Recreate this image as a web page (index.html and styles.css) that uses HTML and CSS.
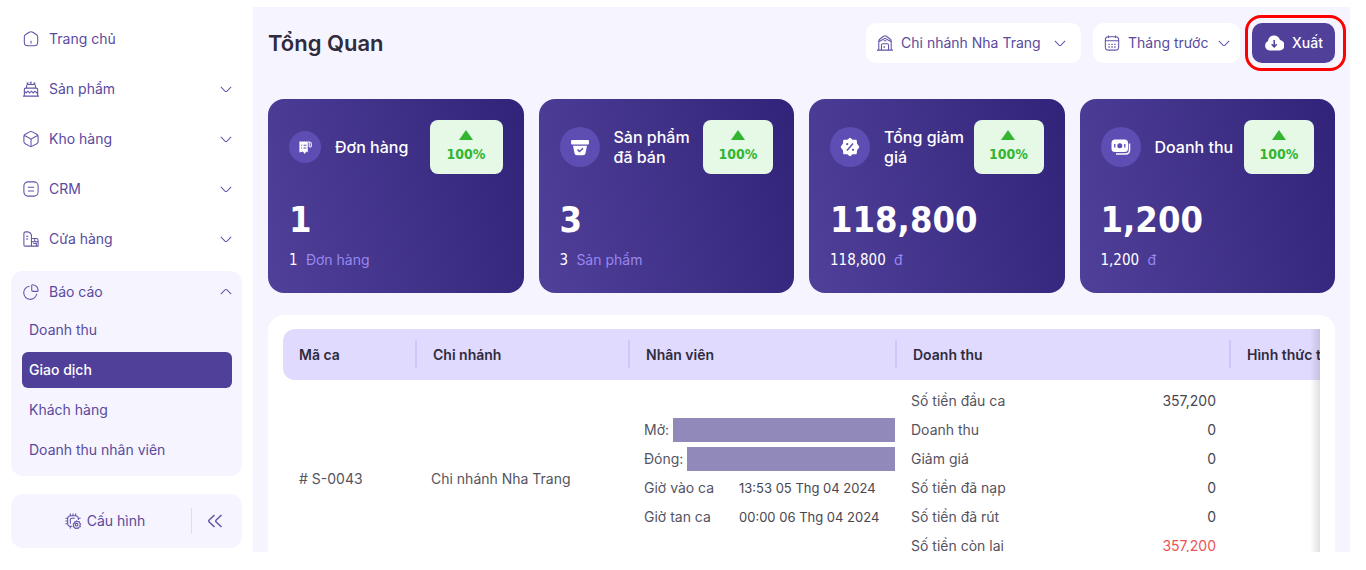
FILE: index.html
```html
<!DOCTYPE html>
<html lang="vi">
<head>
<meta charset="utf-8">
<meta name="viewport" content="width=device-width, initial-scale=1">
<title>Tổng Quan</title>
<link rel="stylesheet" href="styles.css">
</head>
<body>
<svg class="sprite" aria-hidden="true">
  <symbol id="down" viewBox="0 0 14 8"><path d="M1 1l4.800 4.800q1.200 1 2.400 0L13 1"/></symbol>
  <symbol id="up" viewBox="0 0 14 8"><path d="M1 7l4.800-4.800q1.200-1 2.400 0L13 7"/></symbol>
  <symbol id="tri" viewBox="0 0 14 10"><path d="M7 0l7 10H0z"/></symbol>
</svg>
<div class="app">
  <nav class="sidebar" aria-label="Menu chính">
    <a class="item" href="#"><svg class="icon" viewBox="0 0 18 18"><path d="M1.500 6.500Q1.500 5 3 4l4-2.600q2-1.200 4 0L15 4q1.500 1 1.500 2.500V13q0 3.500-3.500 3.500H5Q1.500 16.500 1.500 13zM9 11v3"/></svg><span>Trang chủ</span></a>
    <button class="item"><svg class="icon" viewBox="0 0 18 18"><path d="M0 17h18M1.500 17V9.500Q1.500 8 3 8h12q1.500 0 1.500 1.500V17M4 8V5.500Q4 4 5.500 4h7Q14 4 14 5.500V8M5.500 4V1.500M9 4V.5M12.500 4V1.500M4 2.500h1.500M7.500 2H9M12.500 2.500H14M1.500 11.500l2 2 2-2 2 2 2-2 2 2 2-2 2 2 1-1"/></svg><span>Sản phẩm</span><svg class="chev"><use href="#down"/></svg></button>
    <button class="item"><svg class="icon" viewBox="0 0 18 18"><path d="M7.500 1q1.500-.8 3 0l5 2.700q1.500.8 1.500 2.500v5.600q0 1.700-1.500 2.500l-5 2.700q-1.500.8-3 0l-5-2.700Q1 13.500 1 11.800V6.200q0-1.700 1.500-2.500zM1.500 4.800L9 9.200l7.500-4.400M9 9.200V17"/></svg><span>Kho hàng</span><svg class="chev"><use href="#down"/></svg></button>
    <button class="item"><svg class="icon" viewBox="0 0 18 18"><rect x="1" y="1" width="16" height="16" rx="4.500"/><path d="M5.500 7h7M5.500 11.300h7"/></svg><span>CRM</span><svg class="chev"><use href="#down"/></svg></button>
    <button class="item"><svg class="icon" viewBox="0 0 18 18"><path d="M9.500 17H2.500Q1 17 1 15.500V3Q1 1 3 1h2q4 .5 4.500 4v12M3.500 6H6M3.500 9H6M9.500 8.500H15q2 0 2 2V17H9.500M9.500 11.500q1.800 1.500 3.700 0 1.800 1.500 3.800 0M13.200 8.500v3M11.500 14h3.500v3"/></svg><span>Cửa hàng</span><svg class="chev"><use href="#down"/></svg></button>
    <div class="group">
      <button class="item head" aria-expanded="true"><svg class="icon" viewBox="0 0 18 18"><path d="M7.500 2.500A7.400 7.400 0 1 0 15.500 11M9.800 1.800Q9.800.7 11 .9A7 7 0 0 1 17 7q.2 1.300-1 1.300h-4.700q-1.500 0-1.500-1.500z"/></svg><span>Báo cáo</span><svg class="chev"><use href="#up"/></svg></button>
      <div class="subs">
        <a class="sub" href="#">Doanh thu</a>
        <a class="sub active" href="#" aria-current="page">Giao dịch</a>
        <a class="sub" href="#">Khách hàng</a>
        <a class="sub" href="#">Doanh thu nhân viên</a>
      </div>
    </div>
    <div class="config">
      <button class="settings"><svg class="icon" viewBox="0 0 18 18"><path d="M8 15H6.500Q3 15 3 11.500V6.500Q3 3 6.500 3h5Q15 3 15 6.500V8M6 3V.5M9 3V.5M12 3V.5M3 6H.5M3 9H.5M3 12H.5M6 15v2.500M15 6h2.500M6 12V7.500Q6 6 7.500 6H11"/><path d="M13 8.800l1.200 1.100 1.700-.2.300 1.600 1.300 1-.8 1.500.5 1.600-1.600.5-.8 1.400-1.700-.3-1.500.5-.8-1.500-1.600-.5.600-1.600-.6-1.500 1.400-.9.300-1.600 1.600.1z"/><circle cx="13" cy="13.200" r="1.500"/></svg><span>Cấu hình</span></button>
      <button class="collapse" aria-label="Thu gọn"><svg viewBox="0 0 16 14"><path d="M7.500 1L2.200 6q-1 1 0 2l5.300 5M14.500 1L9.200 6q-1 1 0 2l5.300 5"/></svg></button>
    </div>
  </nav>

  <main class="main">
    <header class="top">
      <h1>Tổng Quan</h1>
      <label class="picker branch"><svg class="icon" viewBox="0 0 18 18"><path d="M0 17h18M2 17V6.800Q2 5.500 3 4.800l4.500-3.400q1.500-1 3 0L15 4.800q1 .7 1 2V17M2 7.500L9 3.800l7 3.700M7.500 6.500h3M5 17v-5.500Q5 9.800 6.700 9.800h4.600q1.700 0 1.700 1.700V17M8 12.500v2"/></svg><select aria-label="Chi nhánh"><option>Chi nhánh Nha Trang</option></select><svg class="chev"><use href="#down"/></svg></label>
      <label class="picker period"><svg class="icon" viewBox="0 0 18 18"><path d="M5 .5v3M13 .5v3M1.500 6.500h15M5 2h8q3.500 0 3.500 3.500v8q0 3.500-3.500 3.500H5q-3.500 0-3.500-3.500v-8Q1.500 2 5 2z"/><path class="dots" d="M5 10.500h1.500M8.300 10.500h1.500M11.500 10.500H13M5 13.500h1.500M8.300 13.500h1.500M11.500 13.500H13"/></svg><select aria-label="Thời gian"><option>Tháng trước</option></select><svg class="chev"><use href="#down"/></svg></label>
      <button class="export"><svg viewBox="0 0 20 16"><path fill="currentColor" d="M5.500 15.500A5 5 0 0 1 4 6Q5 .5 10.200.5 14.500.5 16 5a5.300 5.300 0 0 1-1.500 10.500z"/><path d="M10.200 5v6.500M7.700 9.200l2.500 2.600 2.500-2.600" fill="none" stroke="#504099" stroke-width="1.500"/></svg><span>Xuất</span></button>
    </header>

    <section class="cards">
      <article class="card">
        <div class="card-top">
          <span class="badge small"><svg viewBox="0 0 20 20"><path fill="#fff" d="M2 2h12v16l-2-1.500L9.500 20 7 16.500 2 18z"/><path fill="none" stroke="#fff" stroke-width="1.500" d="M14 2.800h2.500Q19 3 19 5.500V9q-1.500 2.500-3 0V4"/><path d="M4.500 7.500H6M8 7.500h4M4.500 11.500H6M8 11.500h4" stroke="#5e4db2" stroke-width="1.500"/></svg></span>
          <h2>Đơn hàng</h2>
          <span class="trend first"><svg><use href="#tri"/></svg>100%</span>
        </div>
        <strong>1</strong>
        <p>1 <span>Đơn hàng</span></p>
      </article>
      <article class="card">
        <div class="card-top">
          <span class="badge"><svg viewBox="0 0 20 20"><path fill="#fff" d="M2 3h16q1 0 1 1v2q0 1.500-1 1.500H2Q1 7.500 1 6V4q0-1 1-1zM3 8.800h14l-1.500 7.500q-.4 2-2.500 2H7q-2.100 0-2.500-2z"/><path d="M7.500 12.500l2 2 3.500-3.200" fill="none" stroke="#5e4db2" stroke-width="1.500"/></svg></span>
          <h2>Sản phẩm đã bán</h2>
          <span class="trend"><svg><use href="#tri"/></svg>100%</span>
        </div>
        <strong>3</strong>
        <p>3 <span>Sản phẩm</span></p>
      </article>
      <article class="card">
        <div class="card-top">
          <span class="badge"><svg viewBox="0 0 20 20"><path fill="#fff" stroke="#fff" stroke-linejoin="round" stroke-width="1.500" d="M10 1.500l2.500 2 3.500-.1.300 3.300L18.500 10l-2.200 3.100-.3 3.400-3.500-.1-2.500 2.100-2.600-2.100-3.400.1-.3-3.400L1.500 10l2.200-3.300.3-3.300 3.400.1z"/><path d="M13 6.500l-6 7" stroke="#5e4db2" stroke-width="1.500"/><circle cx="7.200" cy="7.200" r="1.100" fill="#5e4db2"/><circle cx="13" cy="12.800" r="1.100" fill="#5e4db2"/></svg></span>
          <h2>Tổng giảm giá</h2>
          <span class="trend"><svg><use href="#tri"/></svg>100%</span>
        </div>
        <strong>118,800</strong>
        <p>118,800 <span>đ</span></p>
      </article>
      <article class="card">
        <div class="card-top">
          <span class="badge"><svg viewBox="0 0 20 20"><rect x="0.500" y="2.500" width="16.500" height="12.500" rx="3.500" fill="#fff"/><path d="M18.500 6.500V13q0 4-4 4H5" fill="none" stroke="#fff" stroke-width="1.500"/><circle cx="8.800" cy="8.800" r="2.500" fill="#5e4db2"/><path d="M3.800 7v3.500M13.800 7v3.500" stroke="#5e4db2" stroke-width="1.300"/></svg></span>
          <h2>Doanh thu</h2>
          <span class="trend"><svg><use href="#tri"/></svg>100%</span>
        </div>
        <strong>1,200</strong>
        <p>1,200 <span>đ</span></p>
      </article>
    </section>

    <section class="panel">
      <div class="scroller">
        <table>
          <thead>
            <tr><th class="c-code">Mã ca</th><th class="c-branch">Chi nhánh</th><th class="c-staff">Nhân viên</th><th class="c-revenue">Doanh thu</th><th class="c-method">Hình thức thanh toán</th></tr>
          </thead>
          <tbody>
            <tr>
              <td># S-0043</td>
              <td class="inset">Chi nhánh Nha Trang</td>
              <td class="list">
                <div class="line"><span>Mở:</span><i class="redacted"></i></div>
                <div class="line"><span>Đóng:</span><i class="redacted"></i></div>
                <div class="line time"><span>Giờ vào ca</span><b>13:53 05 Thg 04 2024</b></div>
                <div class="line time"><span>Giờ tan ca</span><b>00:00 06 Thg 04 2024</b></div>
              </td>
              <td class="list sums">
                <div class="line"><span>Số tiền đầu ca</span><b>357,200</b></div>
                <div class="line"><span>Doanh thu</span><b>0</b></div>
                <div class="line"><span>Giảm giá</span><b>0</b></div>
                <div class="line"><span>Số tiền đã nạp</span><b>0</b></div>
                <div class="line"><span>Số tiền đã rút</span><b>0</b></div>
                <div class="line"><span>Số tiền còn lại</span><b class="negative">357,200</b></div>
              </td>
              <td></td>
            </tr>
          </tbody>
        </table>
      </div>
    </section>
  </main>
</div>
</body>
</html>
```
FILE: styles.css
```css
* { box-sizing: border-box; }

body {
  margin: 0;
  background: #fff;
  color: #55535f;
  font: 14px/20px Inter, "Noto Sans", sans-serif;
}

button, select {
  font: inherit;
  color: inherit;
  border: 0;
  background: none;
  padding: 0;
  margin: 0;
  cursor: pointer;
}

a { color: inherit; text-decoration: none; }

h1, h2, p { margin: 0; }

.sprite { position: absolute; width: 0; height: 0; }

.app {
  display: flex;
  height: calc(100vh - 18px);
  padding: 7px 16px 0 0;
  overflow: hidden;
}

.icon, .chev, .collapse svg {
  flex: none;
  fill: none;
  stroke: #6354a8;
  stroke-width: 1.2;
}

.icon { width: 16px; height: 16px; }
.chev { width: 12px; height: 7px; }

/* Sidebar */
.sidebar {
  flex: none;
  width: 253px;
  padding: 11px 11px 0;
  color: #594a9e;
}

.item {
  display: flex;
  align-items: center;
  gap: 10px;
  width: 100%;
  height: 42px;
  margin-bottom: 8px;
  padding: 0 10px 0 12px;
  text-align: left;
}

.item span { flex: 1; }
.item.head { height: 41px; margin: 0; }

.group {
  margin-top: 11px;
  padding-bottom: 8px;
  border-radius: 12px;
  background: #f6f4fe;
}

.subs {
  display: grid;
  gap: 4px;
  padding: 0 10px 0 11px;
}

.sub {
  padding: 8px 7px;
  border-radius: 6px;
}

.sub.active { background: #504099; color: #fff; font-weight: 500; }

.config {
  display: flex;
  align-items: center;
  height: 54px;
  margin-top: 18px;
  border-radius: 12px;
  background: #f6f4fe;
}

.settings {
  display: flex;
  flex: 1;
  align-items: center;
  justify-content: center;
  gap: 6px;
  height: 26px;
  padding-left: 8px;
  border-right: 1px solid #e1daff;
}

.collapse {
  display: grid;
  place-items: center;
  width: 50px;
  height: 26px;
  padding-right: 4px;
}

.collapse svg { width: 16px; height: 14px; stroke-width: 1.5; }

/* Main area */
.main {
  flex: 1;
  min-width: 0;
  padding: 16px 15px 0;
  background: #f6f4fe;
}

.top {
  display: flex;
  align-items: center;
  height: 40px;
  margin-bottom: 36px;
}

h1 {
  flex: 1;
  color: #2f2b3d;
  font-size: 22px;
  font-weight: 600;
  line-height: 28px;
}

.picker {
  display: flex;
  align-items: center;
  gap: 8px;
  height: 40px;
  margin-right: 12px;
  border-radius: 10px;
  background: #fff;
  color: #594a9e;
}

.picker select { flex: 1; min-width: 0; appearance: none; outline: 0; }
.branch { width: 215px; padding: 0 15px 0 11px; }
.period { width: 147px; padding: 0 10px 0 11px; }
.dots { stroke-width: 1.5; }

.export {
  position: relative;
  display: flex;
  align-items: center;
  gap: 8px;
  height: 40px;
  padding: 0 12px;
  border-radius: 10px;
  background: #504099;
  color: #fff;
  font-weight: 500;
}

.export::after {
  content: "";
  position: absolute;
  inset: -8px -11px -8px -7px;
  border: 3px solid #f00;
  border-radius: 16px;
}

.export svg { width: 20px; height: 16px; }

/* Summary cards */
.cards {
  display: grid;
  grid-template-columns: repeat(4, 1fr);
  gap: 15px;
}

.card {
  height: 194px;
  padding: 21px;
  border-radius: 16px;
  background: linear-gradient(75deg, #504099, #32237a);
  color: #fff;
}

.card-top { display: flex; align-items: center; height: 54px; }

.badge {
  display: grid;
  flex: none;
  place-items: center;
  width: 40px;
  height: 40px;
  margin-right: 14px;
  border-radius: 50%;
  background: #5e4db2;
}

.badge svg { width: 20px; height: 20px; }
.badge.small { width: 32px; height: 32px; }
.badge.small svg { width: 14px; height: 14px; }

h2 {
  flex: 1;
  min-width: 0;
  font-size: 16px;
  font-weight: 500;
  line-height: 20px;
}

.trend {
  display: grid;
  flex: none;
  place-content: center;
  justify-items: center;
  gap: 4px;
  width: 70px;
  height: 54px;
  border-radius: 8px;
  background: #e6f9e6;
  color: #33b531;
  font: 700 14px/20px "DejaVu Sans Condensed", "DejaVu Sans", sans-serif;
}

.trend.first { width: 73px; }
.trend svg { width: 14px; height: 10px; fill: #33b531; }

.card strong {
  display: block;
  margin-top: 22px;
  font: 700 36px/48px "DejaVu Sans Condensed", "DejaVu Sans", sans-serif;
}

.card p {
  margin-top: 6px;
  font-family: "DejaVu Sans Condensed", "DejaVu Sans", sans-serif;
  font-size: 15px;
}

.card p span { margin-left: 4px; color: #9987f0; font-family: Inter, sans-serif; font-size: 14px; }

/* Shift table */
.panel {
  height: 400px;
  margin-top: 22px;
  padding: 14px 15px;
  border-radius: 16px;
  background: #fff;
}

.scroller { position: relative; overflow: hidden; }

.scroller::after {
  content: "";
  position: absolute;
  inset: 0 0 0 auto;
  width: 10px;
  background: linear-gradient(90deg, transparent, rgba(0, 0, 0, .12));
}

table {
  width: 1160px;
  border-collapse: separate;
  border-spacing: 0;
  table-layout: fixed;
}

th {
  position: relative;
  height: 51px;
  padding: 0 16px;
  background: #e1daff;
  color: #2f2b3d;
  font-weight: 600;
  text-align: left;
  white-space: nowrap;
}

th:first-child { border-radius: 12px 0 0 12px; }

th:not(:last-child)::after {
  content: "";
  position: absolute;
  top: 11px;
  right: 0;
  width: 2px;
  height: 28px;
  background: #d0c6fc;
}

.c-code { width: 134px; }
.c-branch { width: 213px; }
.c-staff { width: 267px; }
.c-revenue { width: 334px; }

td { padding: 0 16px; }
td.inset { padding-left: 14px; }
td.list { padding: 6px 2px 18px 14px; }
td.sums { padding-right: 15px; }

.line {
  display: flex;
  align-items: center;
  justify-content: space-between;
  gap: 4px;
  height: 29px;
}

.line.time { padding-right: 13px; }
.line.time b { width: 143px; font-size: 13px; }
.line b { color: #48464f; font-weight: 400; }
.line .negative { color: #ea5455; }

.redacted { flex: 1; height: 24px; background: #9189b9; }
```
